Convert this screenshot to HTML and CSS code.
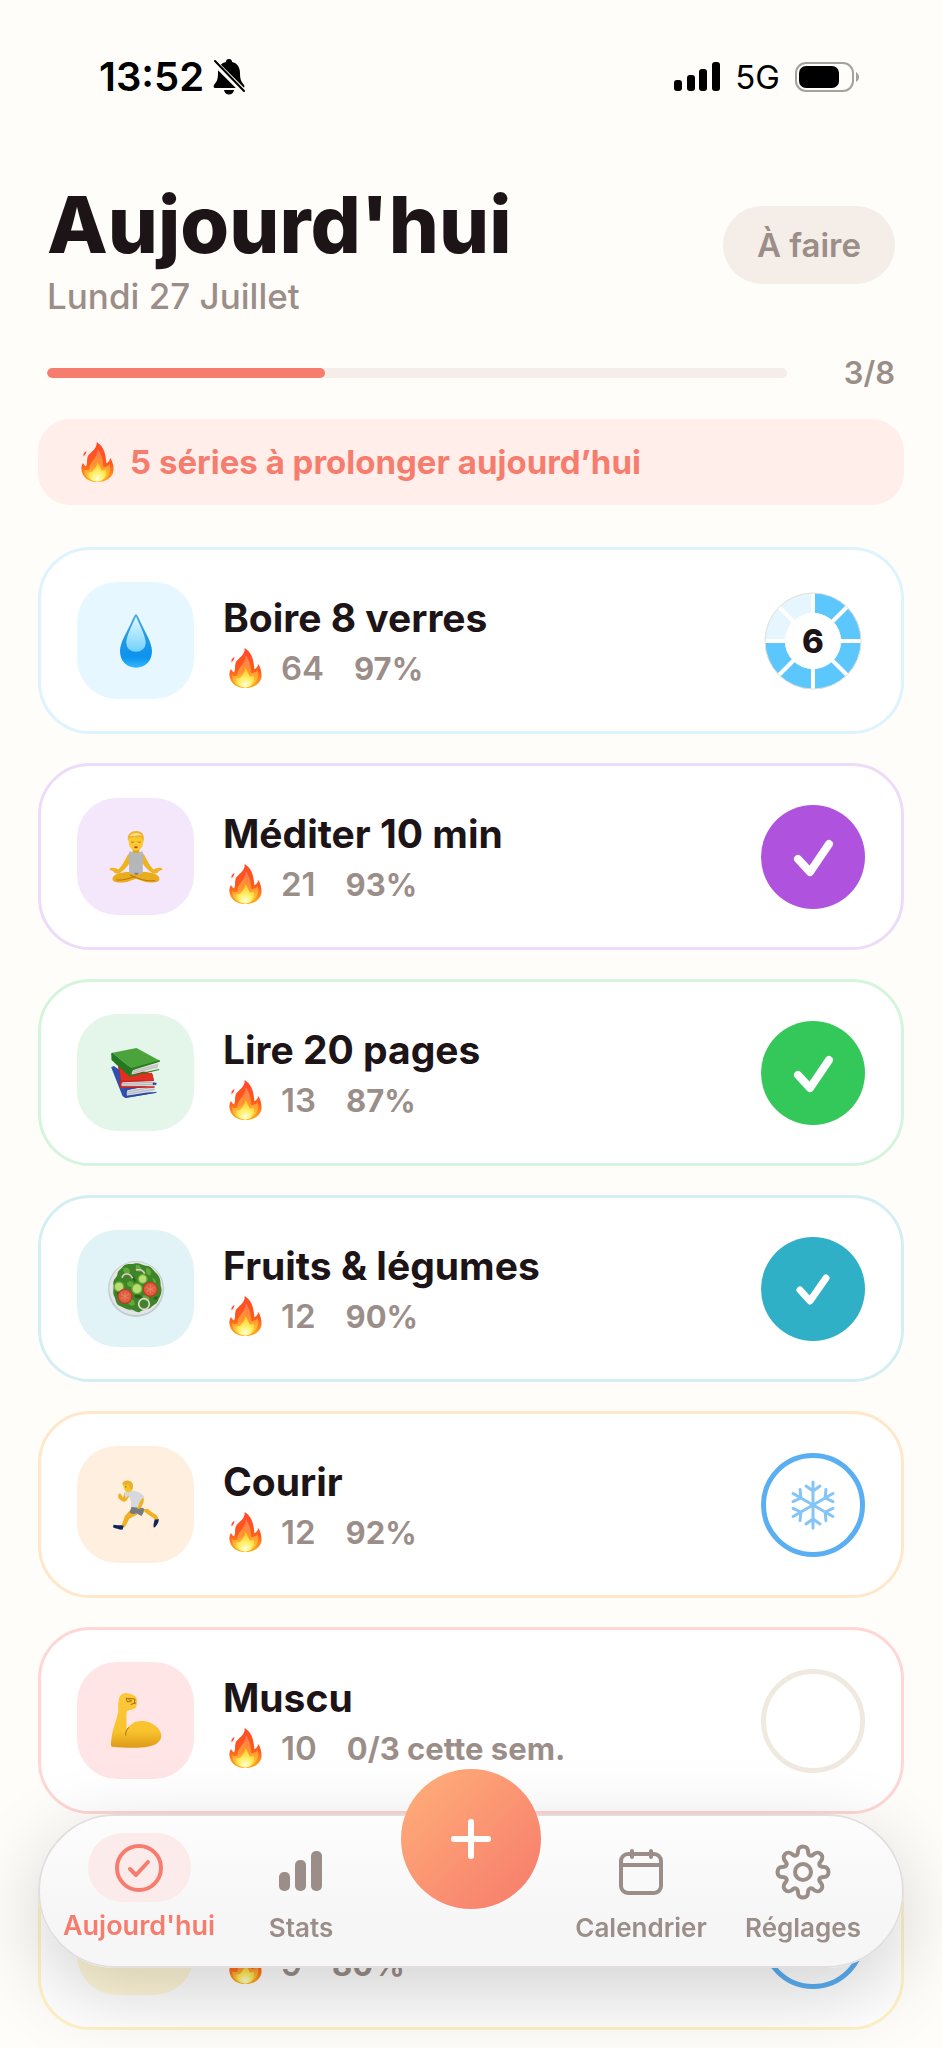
FILE: index.html
```html
<!DOCTYPE html>
<html lang="fr">
<head>
    <meta charset="UTF-8">
    <meta name="viewport" content="width=device-width, initial-scale=1.0">
    <title>Aujourd'hui</title>
    <link rel="stylesheet" href="styles.css">
</head>
<body>

    <!-- Symboles réutilisés -->
    <svg class="sprite" aria-hidden="true">
        <defs>
            <linearGradient id="flameOuter" x1="0" y1="0" x2="0" y2="1">
                <stop offset="0" stop-color="#ff4a2c"/>
                <stop offset="0.55" stop-color="#ff5a1c"/>
                <stop offset="1" stop-color="#ffb01c"/>
            </linearGradient>
            <linearGradient id="flameMid" x1="0" y1="0" x2="0" y2="1">
                <stop offset="0" stop-color="#ff7a50"/>
                <stop offset="0.5" stop-color="#ff9430"/>
                <stop offset="1" stop-color="#ffd93a"/>
            </linearGradient>
            <radialGradient id="flameCore" cx="0.5" cy="0.85" r="0.7">
                <stop offset="0" stop-color="#ffffd8"/>
                <stop offset="0.5" stop-color="#fff066"/>
                <stop offset="1" stop-color="#ffcf2e"/>
            </radialGradient>
        </defs>
        <symbol id="flame" viewBox="0 0 97 120">
            <path fill="url(#flameOuter)" d="M46 0C66 12 73 32 75 64C83 60 86 54 86 47C96 60 99 82 95 93C89 110 71 120 48 120C24 120 2 108 0 80C0 73 2 68 5 63C8 69 11 72 14 73C19 66 16 58 18 48C20 32 48 26 46 0Z"/>
            <path fill="#ff5230" d="M15 27C16 36 9 38 8 44C4 38 7 31 15 27Z"/>
            <path fill="url(#flameMid)" d="M49 22C60 36 65 52 66 76C76 75 82 70 85 65C91 88 82 113 49 118C22 117 8 102 9 82C14 86 20 86 25 82C21 60 50 50 49 22Z"/>
            <path fill="url(#flameCore)" d="M48 60C54 68 57 78 61 85C66 87 70 85 73 82C79 102 66 118 48 119C30 118 17 104 22 90C26 92 31 92 34 88C38 80 48 74 48 60Z"/>
        </symbol>
        <symbol id="check" viewBox="0 0 104 104">
            <path d="M37 54L49 67L68 39" fill="none" stroke="#fff" stroke-width="8" stroke-linecap="round" stroke-linejoin="round"/>
        </symbol>
        <symbol id="check-small" viewBox="0 0 104 104">
            <path d="M39 53L49 64L65 41" fill="none" stroke="#fff" stroke-width="7" stroke-linecap="round" stroke-linejoin="round"/>
        </symbol>
    </svg>

    <div class="status-bar">
        <div class="status-left">
            <span class="clock">13:52</span>
            <svg class="bell" viewBox="0 0 32 36">
                <path d="M16 0C18 0 19 1 19 3C24 4 27 8 27 14C27 22 29 23 31 26C32 28 31 29 30 29H2C1 29 0 28 1 26C3 23 5 22 5 14C5 8 8 4 13 3C13 1 14 0 16 0Z"/>
                <path d="M11 31H21C20 37 12 37 11 31Z"/>
                <path d="M0 2L31 33" stroke="#fffdf9" stroke-width="6"/>
                <path d="M2 2L31 32" stroke="#000" stroke-width="2" stroke-linecap="round"/>
            </svg>
        </div>
        <div class="status-right">
            <svg class="signal" viewBox="0 0 46 29">
                <rect x="0" y="18" width="8" height="11" rx="3"/>
                <rect x="13" y="13" width="8" height="16" rx="3"/>
                <rect x="25" y="7" width="8" height="22" rx="3"/>
                <rect x="38" y="0" width="8" height="29" rx="3"/>
            </svg>
            <span class="network">5G</span>
            <svg class="battery" viewBox="0 0 64 30">
                <rect x="1" y="1" width="57" height="28" rx="10" fill="none" stroke="#a3a29f" stroke-width="2"/>
                <path d="M61 10C65 12 65 18 61 20Z" fill="#a3a29f"/>
                <rect x="4" y="4" width="40" height="22" rx="7"/>
            </svg>
        </div>
    </div>

    <main class="page">
        <header class="page-header">
            <div>
                <h1>Aujourd'hui</h1>
                <p class="date">Lundi 27 Juillet</p>
            </div>
            <button type="button" class="filter-btn">À faire</button>
        </header>

        <div class="progress-row">
            <div class="progress-track">
                <div class="progress-fill" style="width: 37.5%"></div>
            </div>
            <span class="progress-label">3/8</span>
        </div>

        <div class="streak-banner">
            <svg class="flame"><use href="#flame"/></svg>
            <span>5 séries à prolonger aujourd’hui</span>
        </div>

        <ul class="habits">
            <li class="habit sky">
                <div class="habit-icon">
                    <svg width="32" height="54" viewBox="0 0 96 160">
                        <defs>
                            <linearGradient id="dropBody" x1="0" y1="0" x2="0" y2="1">
                                <stop offset="0" stop-color="#4aa8d8"/>
                                <stop offset="0.5" stop-color="#1e98e4"/>
                                <stop offset="0.8" stop-color="#0b93ee"/>
                                <stop offset="1" stop-color="#35b8fa"/>
                            </linearGradient>
                            <linearGradient id="dropShine" x1="0" y1="0" x2="0" y2="1">
                                <stop offset="0" stop-color="#e0f6ff"/>
                                <stop offset="0.6" stop-color="#a2e2ff"/>
                                <stop offset="1" stop-color="#6fd0ff"/>
                            </linearGradient>
                        </defs>
                        <path fill="url(#dropBody)" d="M48 0C52 0 56 12 64 28C76 54 96 84 96 110C96 140 76 160 48 160C20 160 0 140 0 110C0 84 20 54 32 28C40 12 44 0 48 0Z"/>
                        <path fill="url(#dropShine)" d="M48 6C52 18 78 66 77 86C76 104 63 112 48 112C33 112 20 104 19 86C18 66 44 18 48 6Z"/>
                    </svg>
                </div>
                <div class="habit-body">
                    <h2>Boire 8 verres</h2>
                    <p class="habit-meta"><svg class="flame"><use href="#flame"/></svg><span class="streak">64</span><span class="rate">97%</span></p>
                </div>
                <button type="button" class="habit-state counter" aria-label="Ajouter un verre">
                    <svg viewBox="0 0 104 104">
                        <circle cx="52" cy="52" r="38" fill="none" stroke="#e6f6fe" stroke-width="20"/>
                        <circle cx="52" cy="52" r="38" fill="none" stroke="#5bc7fd" stroke-width="20" pathLength="8" stroke-dasharray="6 2" transform="rotate(-90 52 52)"/>
                        <path d="M52 3V101M3 52H101M17 17L87 87M87 17L17 87" stroke="#fff" stroke-width="4"/>
                        <circle cx="52" cy="52" r="28" fill="#fff"/>
                        <circle cx="52" cy="52" r="48" fill="none" stroke="#e3ded6" stroke-width="1"/>
                    </svg>
                    <span>6</span>
                </button>
            </li>

            <li class="habit purple">
                <div class="habit-icon">
                    <svg width="54" height="52" viewBox="0 0 160 157">
                        <path fill="#eeb41f" d="M58 68C48 84 40 104 27 116C18 111 4 108 0 115C0 120 8 118 12 122C18 130 26 130 32 126C46 116 58 104 62 92ZM102 68C112 84 120 104 133 116C142 111 156 108 160 115C160 120 152 118 148 122C142 130 134 130 128 126C114 116 102 104 98 92Z"/>
                        <path fill="#e9ac1c" d="M60 124C34 124 8 132 9 145C10 157 30 157 52 154L80 144L108 154C130 157 150 157 151 145C152 132 126 124 100 124Z"/>
                        <path fill="none" stroke="#b97508" stroke-width="3" d="M20 148C45 150 60 142 78 137M62 133C90 146 110 152 138 150"/>
                        <path fill="#e5a51b" d="M70 48H90V68H70Z"/>
                        <path fill="#b4b6ba" d="M60 63C67 60 68 66 80 67C92 66 93 60 100 63C105 75 99 88 101 126C90 132 70 132 59 126C61 88 55 75 60 63Z"/>
                        <path fill="#7d8087" d="M74 126H88L84 132H78Z"/>
                        <path fill="#fbc92f" d="M58 26C58 8 102 8 102 26C104 48 92 60 80 60C68 60 56 48 58 26Z"/>
                        <path fill="#efb32c" d="M56 30C52 10 64 0 81 0C98 0 107 12 103 32C100 26 98 20 90 18C80 22 66 18 61 22C58 24 58 28 56 30Z"/>
                        <path fill="#ffe08a" d="M62 14C68 4 92 2 98 14C88 10 74 18 62 14Z"/>
                        <path fill="none" stroke="#80520a" stroke-width="2" stroke-linecap="round" d="M66 33C68 35 72 35 74 33M86 33C88 35 92 35 94 33"/>
                        <path fill="#b6401d" d="M74 48C78 45 82 45 86 48C83 53 77 53 74 48Z"/>
                    </svg>
                </div>
                <div class="habit-body">
                    <h2>Méditer 10 min</h2>
                    <p class="habit-meta"><svg class="flame"><use href="#flame"/></svg><span class="streak">21</span><span class="rate">93%</span></p>
                </div>
                <button type="button" class="habit-state done" aria-label="Méditer 10 min, fait"><svg><use href="#check"/></svg></button>
            </li>

            <li class="habit green">
                <div class="habit-icon">
                    <svg width="49" height="50" viewBox="0 0 146 150">
                        <path fill="#2f50ae" d="M0 58L8 54L60 90L134 104L136 110L44 128L136 134L42 150L34 144Z"/>
                        <path fill="#dcdde2" d="M46 126L132 110L130 130L46 143Z"/>
                        <path fill="none" stroke="#9b9ca4" stroke-width="2" d="M47 132L130 117M47 138L130 124"/>
                        <path fill="#2c4ba6" d="M42 122L136 104V108L50 126C44 132 46 140 48 144L136 131V134L42 150Z"/>
                        <path fill="#c92019" d="M20 56L30 48L124 78L128 96L32 102Z"/>
                        <path fill="#e12f22" d="M24 58L60 82L122 74L128 97L30 101Z"/>
                        <path fill="#dcdcdc" d="M30 101L126 98L124 114L30 116Z"/>
                        <path fill="none" stroke="#a3a3a3" stroke-width="2" d="M32 107L125 103M32 112L125 109"/>
                        <path fill="#ce241b" d="M24 98L128 96V99L34 103C29 108 30 113 32 115L130 115V119L27 120Z"/>
                        <path fill="#4ba43b" d="M4 14L76 0L146 38L62 62Z"/>
                        <path fill="#23791f" d="M0 16L4 14L62 62L56 86C40 72 16 50 1 36Z"/>
                        <path fill="#dfe0de" d="M62 66L142 44L140 60L60 80Z"/>
                        <path fill="none" stroke="#a2a3a1" stroke-width="2" d="M62 71L141 50M61 76L140 56"/>
                        <path fill="#277f22" d="M58 61L146 37V41L66 66C60 72 60 78 62 81L144 63V66L56 87Z"/>
                    </svg>
                </div>
                <div class="habit-body">
                    <h2>Lire 20 pages</h2>
                    <p class="habit-meta"><svg class="flame"><use href="#flame"/></svg><span class="streak">13</span><span class="rate">87%</span></p>
                </div>
                <button type="button" class="habit-state done" aria-label="Lire 20 pages, fait"><svg><use href="#check"/></svg></button>
            </li>

            <li class="habit teal">
                <div class="habit-icon">
                    <svg width="56" height="56" viewBox="0 0 168 168">
                        <circle cx="84" cy="84" r="84" fill="#c5cbcc"/>
                        <circle cx="84" cy="82" r="80" fill="#e2e6e6"/>
                        <circle cx="84" cy="82" r="70" fill="#cfd5d4"/>
                        <path fill="#3d8526" d="M42 20C54 4 68 12 78 8C94 4 104 14 114 14C130 14 136 28 144 36C156 46 158 60 158 74C164 90 158 104 152 114C148 130 134 132 128 140C118 146 104 144 94 154C82 154 76 144 66 146C52 144 44 138 34 134C22 128 24 114 18 104C12 92 20 82 16 70C14 56 26 50 28 42C28 30 36 26 42 20Z"/>
                        <path fill="#61a93a" d="M46 22C58 14 70 26 64 38C54 44 44 36 46 22ZM84 12C96 10 104 22 98 32C86 34 80 24 84 12ZM116 20C128 22 134 36 126 44C116 42 110 32 116 20ZM56 66C68 56 78 62 78 74C70 82 58 78 56 66ZM104 104C116 100 126 106 124 118C112 122 104 116 104 104ZM60 118C72 110 82 118 80 132C68 138 58 130 60 118ZM132 50C144 54 146 62 140 70Z"/>
                        <path fill="#24641a" d="M70 40C80 46 84 54 82 64C74 58 68 50 70 40ZM92 48C98 40 108 44 112 52C104 60 96 58 92 48ZM78 104C88 98 100 100 102 112C92 114 82 112 78 104ZM26 86C34 92 38 100 34 108C26 102 24 94 26 86ZM136 112C142 106 148 104 150 108C146 118 140 118 136 112Z"/>
                        <path fill="none" stroke="#e6c6d2" stroke-width="5" d="M42 50C46 36 66 34 74 52M84 28C94 22 106 28 110 38"/>
                        <g fill="#b8dd72" stroke="#6aae38" stroke-width="4">
                            <circle cx="33" cy="77" r="14"/>
                            <circle cx="104" cy="54" r="13"/>
                            <circle cx="87" cy="83" r="15"/>
                        </g>
                        <g fill="#dd5f43" stroke="#c03a26" stroke-width="4">
                            <circle cx="51" cy="106" r="21"/>
                            <circle cx="127" cy="85" r="21"/>
                        </g>
                        <path stroke="#ea8560" stroke-width="3" d="M51 94V118M39 99L63 113M39 113L63 99M127 73V97M115 79L139 91M115 91L139 79"/>
                        <circle cx="108" cy="129" r="16" fill="none" stroke="#ecd2dc" stroke-width="5"/>
                    </svg>
                </div>
                <div class="habit-body">
                    <h2>Fruits &amp; légumes</h2>
                    <p class="habit-meta"><svg class="flame"><use href="#flame"/></svg><span class="streak">12</span><span class="rate">90%</span></p>
                </div>
                <button type="button" class="habit-state done" aria-label="Fruits et légumes, fait"><svg><use href="#check-small"/></svg></button>
            </li>

            <li class="habit orange">
                <div class="habit-icon">
                    <svg width="46" height="50" viewBox="0 0 139 150">
                        <path fill="#f0b021" d="M52 90L36 108C32 118 30 130 24 138L34 142C42 136 44 124 50 116L74 104ZM88 88C98 100 112 108 122 114C128 118 128 124 128 132L136 126C140 112 132 104 122 100L104 86Z"/>
                        <path fill="#10235f" d="M2 134C12 138 20 134 32 138C32 142 30 148 28 150C18 148 8 146 0 142ZM126 118C130 120 134 118 138 117C140 126 132 138 124 144C120 140 124 128 126 118Z"/>
                        <path fill="#777b80" d="M56 80L92 84C96 92 92 100 86 108C78 106 72 98 66 102C58 104 54 100 50 98Z"/>
                        <path fill="#efb226" d="M36 36L30 52C26 48 26 40 20 40C14 42 14 52 20 58C28 66 36 68 40 62L50 48ZM78 44L92 52C96 62 90 74 84 84C78 90 70 86 72 78C76 70 80 66 80 62Z"/>
                        <path fill="#d6d8dd" d="M36 38C46 30 60 30 72 34C82 38 90 42 94 50L84 60C80 66 78 74 76 80C68 84 60 80 54 80C58 66 52 56 46 46L40 54C36 50 34 44 36 38Z"/>
                        <path fill="#f8c42c" d="M30 10C40 0 58 6 59 22C60 34 46 40 38 34C36 28 30 22 30 10Z"/>
                        <path fill="#eab02b" d="M28 14C28 2 44 -2 54 4C64 10 60 24 58 28L52 28L48 14C42 16 34 12 28 14Z"/>
                        <circle cx="39" cy="20" r="2" fill="#5d3900"/>
                    </svg>
                </div>
                <div class="habit-body">
                    <h2>Courir</h2>
                    <p class="habit-meta"><svg class="flame"><use href="#flame"/></svg><span class="streak">12</span><span class="rate">92%</span></p>
                </div>
                <button type="button" class="habit-state frozen" aria-label="Courir, série gelée">
                    <svg viewBox="-52 -52 104 104">
                        <g fill="none" stroke="#85c4f7" stroke-width="3" stroke-linecap="round" stroke-linejoin="round">
                            <path d="M0 0V-23M-7 -19L0 -14L7 -19"/>
                            <path d="M0 0V-23M-7 -19L0 -14L7 -19" transform="rotate(60)"/>
                            <path d="M0 0V-23M-7 -19L0 -14L7 -19" transform="rotate(120)"/>
                            <path d="M0 0V-23M-7 -19L0 -14L7 -19" transform="rotate(180)"/>
                            <path d="M0 0V-23M-7 -19L0 -14L7 -19" transform="rotate(240)"/>
                            <path d="M0 0V-23M-7 -19L0 -14L7 -19" transform="rotate(300)"/>
                        </g>
                    </svg>
                </button>
            </li>

            <li class="habit red">
                <div class="habit-icon">
                    <svg width="52" height="55" viewBox="0 0 154 165">
                        <defs>
                            <linearGradient id="arm" x1="0" y1="0" x2="0" y2="1">
                                <stop offset="0" stop-color="#fbc93a"/>
                                <stop offset="0.7" stop-color="#f9c22e"/>
                                <stop offset="1" stop-color="#dd9a18"/>
                            </linearGradient>
                        </defs>
                        <path fill="url(#arm)" d="M26 18C28 6 38 0 48 0C60 2 74 6 78 14C82 24 80 38 76 44C68 50 58 50 50 54C46 68 50 90 48 112C58 92 78 82 98 84C126 86 150 106 153 126C154 144 138 158 112 161C84 166 44 164 4 161C0 158 2 150 3 140C6 108 18 86 24 54C24 40 22 30 26 18Z"/>
                        <path fill="none" stroke="#a86b0c" stroke-width="3" stroke-linecap="round" d="M46 126C46 118 48 112 54 104M48 16L74 18L72 30M48 16L50 26L60 26M62 34L76 30M56 20L64 24"/>
                    </svg>
                </div>
                <div class="habit-body">
                    <h2>Muscu</h2>
                    <p class="habit-meta"><svg class="flame"><use href="#flame"/></svg><span class="streak">10</span><span class="rate">0/3 cette sem.</span></p>
                </div>
                <button type="button" class="habit-state todo" aria-label="Muscu, à faire"></button>
            </li>

            <li class="habit yellow">
                <div class="habit-icon"></div>
                <div class="habit-body">
                    <h2>&nbsp;</h2>
                    <p class="habit-meta"><svg class="flame"><use href="#flame"/></svg><span class="streak">9</span><span class="rate">80%</span></p>
                </div>
                <button type="button" class="habit-state frozen" aria-label="Série gelée"></button>
            </li>
        </ul>
    </main>

    <nav class="tab-bar">
        <a href="#" class="tab active">
            <span class="tab-icon">
                <svg width="50" height="50" viewBox="0 0 50 50" fill="none" stroke="currentColor" stroke-width="4" stroke-linecap="round" stroke-linejoin="round">
                    <circle cx="25" cy="25" r="22"/>
                    <path d="M16 26L22 32L34 19"/>
                </svg>
            </span>
            <span>Aujourd'hui</span>
        </a>
        <a href="#" class="tab">
            <span class="tab-icon">
                <svg width="44" height="58" viewBox="0 0 44 58" fill="currentColor">
                    <rect x="0" y="29" width="11" height="19" rx="5"/>
                    <rect x="16" y="17" width="11" height="31" rx="5"/>
                    <rect x="32" y="8" width="11" height="40" rx="5"/>
                </svg>
            </span>
            <span>Stats</span>
        </a>
        <div class="tab-center">
            <button type="button" class="add-btn" aria-label="Ajouter une habitude">
                <svg width="40" height="40" viewBox="0 0 40 40" stroke="#fff" stroke-width="6" stroke-linecap="round">
                    <path d="M20 3V37M3 20H37"/>
                </svg>
            </button>
        </div>
        <a href="#" class="tab">
            <span class="tab-icon">
                <svg width="46" height="58" viewBox="0 0 46 58" fill="none" stroke="currentColor" stroke-width="4" stroke-linecap="round">
                    <rect x="3" y="11" width="40" height="39" rx="7"/>
                    <path d="M3 22H43M14 8V14M33 8V14"/>
                </svg>
            </span>
            <span>Calendrier</span>
        </a>
        <a href="#" class="tab">
            <span class="tab-icon">
                <svg width="58" height="58" viewBox="-29 -29 58 58" fill="none" stroke="currentColor" stroke-width="4" stroke-linejoin="round">
                    <circle r="8"/>
                    <path d="M-5 -21C-5 -27 5 -27 5 -21C5 -16 8 -15 11 -18C16 -22 22 -16 18 -11C15 -8 16 -5 21 -5C27 -5 27 5 21 5C16 5 15 8 18 11C22 16 16 22 11 18C8 15 5 16 5 21C5 27 -5 27 -5 21C-5 16 -8 15 -11 18C-16 22 -22 16 -18 11C-15 8 -16 5 -21 5C-27 5 -27 -5 -21 -5C-16 -5 -15 -8 -18 -11C-22 -16 -16 -22 -11 -18C-8 -15 -5 -16 -5 -21Z"/>
                </svg>
            </span>
            <span>Réglages</span>
        </a>
    </nav>

</body>
</html>
```
FILE: styles.css
```css
* {
    box-sizing: border-box;
}

body {
    margin: 0;
    font-family: 'Inter', 'Liberation Sans', sans-serif;
    background-color: #fffdf9;
    color: #1c1416;
    min-height: 100vh;
}

h1, h2, p, ul {
    margin: 0;
    padding: 0;
}

svg {
    display: block;
}

button {
    font-family: inherit;
    border: none;
    padding: 0;
    cursor: pointer;
}

.sprite {
    position: absolute;
    width: 0;
    height: 0;
}

/* Barre d'état */
.status-bar {
    display: flex;
    justify-content: space-between;
    align-items: center;
    height: 101px;
    padding: 52px 83px 0 99px;
    color: #000;
}

.status-left,
.status-right {
    display: flex;
    align-items: center;
}

.status-left {
    gap: 9px;
}

.status-right {
    gap: 15px;
}

.clock {
    font-size: 40px;
    font-weight: 600;
}

.network {
    font-size: 33px;
    font-weight: 400;
}

.bell {
    width: 32px;
    height: 36px;
}

.signal {
    width: 46px;
    height: 29px;
}

.battery {
    width: 64px;
    height: 30px;
}

/* En-tête */
.page {
    padding: 73px 38px 18px;
}

.page-header {
    display: flex;
    justify-content: space-between;
    align-items: center;
    padding: 0 9px;
}

h1 {
    font-size: 79px;
    line-height: 100px;
    font-weight: 800;
}

.date {
    margin-top: 2px;
    font-size: 35px;
    line-height: 40px;
    font-weight: 500;
    color: #9b8e89;
}

.filter-btn {
    height: 78px;
    padding: 0 34px;
    border-radius: 39px;
    background-color: #f5ede8;
    color: #9b8e89;
    font-size: 33px;
    font-weight: 600;
}

.progress-row {
    display: flex;
    align-items: center;
    margin-top: 37px;
    padding: 0 9px;
}

.progress-track {
    flex: 1;
    height: 10px;
    border-radius: 5px;
    background-color: #f5ede8;
    overflow: hidden;
}

.progress-fill {
    height: 100%;
    border-radius: 5px;
    background-color: #f67d6e;
}

.progress-label {
    width: 108px;
    text-align: right;
    font-size: 31px;
    line-height: 40px;
    font-weight: 600;
    color: #9b8e89;
}

.streak-banner {
    display: flex;
    align-items: center;
    gap: 16px;
    height: 86px;
    margin-top: 26px;
    padding: 0 43px;
    border-radius: 32px;
    background-color: #ffeeea;
    color: #f67d6e;
    font-size: 33px;
    font-weight: 700;
}

.flame {
    width: 33px;
    height: 40px;
    flex: none;
}

/* Liste des habitudes */
.habits {
    display: flex;
    flex-direction: column;
    gap: 29px;
    margin-top: 42px;
    list-style-type: none;
}

.habit {
    display: flex;
    align-items: center;
    gap: 29px;
    height: 187px;
    padding: 0 36px;
    border: 3px solid;
    border-radius: 52px;
    background-color: #fff;
}

.habit-icon {
    display: flex;
    align-items: center;
    justify-content: center;
    width: 117px;
    height: 117px;
    border-radius: 40px;
}

.habit-body {
    flex: 1;
    padding-top: 3px;
}

.habit h2 {
    font-size: 39px;
    line-height: 52px;
    font-weight: 700;
}

.habit-meta {
    display: flex;
    align-items: center;
    height: 48px;
    padding-left: 6px;
    color: #9b8e89;
}

.streak {
    margin-left: 19px;
    font-size: 33px;
    font-weight: 600;
}

.rate {
    margin-left: 30px;
    font-size: 31px;
    font-weight: 700;
}

.habit-state {
    display: flex;
    align-items: center;
    justify-content: center;
    width: 104px;
    height: 104px;
    border-radius: 50%;
    background-color: transparent;
}

.habit-state svg {
    width: 104px;
    height: 104px;
    flex: none;
}

.counter {
    position: relative;
    color: #1c1416;
    font-size: 33px;
    font-weight: 800;
}

.counter span {
    position: absolute;
}

.frozen {
    border: 5px solid #5aaff3;
}

.todo {
    border: 5px solid #efe9e0;
}

.sky { border-color: #ddf3fe; }
.sky .habit-icon { background-color: #e7f7ff; }

.purple { border-color: #eddcf9; }
.purple .habit-icon { background-color: #f5e7fb; }
.purple .done { background-color: #af52de; }

.green { border-color: #d5f4dd; }
.green .habit-icon { background-color: #e4f6e9; }
.green .done { background-color: #34c759; }

.teal { border-color: #d4eff4; }
.teal .habit-icon { background-color: #e1f3f7; }
.teal .done { background-color: #30b0c7; }

.orange { border-color: #ffe8c9; }
.orange .habit-icon { background-color: #ffefde; }

.red { border-color: #ffd6d4; }
.red .habit-icon { background-color: #ffe5e5; }

.yellow { border-color: #fff2c6; }
.yellow .habit-icon { background-color: #fff8d9; }

/* Barre d'onglets */
.tab-bar {
    position: fixed;
    left: 38px;
    right: 38px;
    bottom: 80px;
    display: flex;
    height: 154px;
    padding: 0 18px;
    border: 2px solid #e2dedf;
    border-radius: 77px;
    background: linear-gradient(#fdfdfd, #f6f6f6 70%);
    box-shadow: 0 24px 80px rgba(0, 0, 0, 0.18);
}

.tab {
    flex: 1;
    display: flex;
    flex-direction: column;
    align-items: center;
    gap: 11px;
    padding-top: 27px;
    color: #9b8e89;
    font-size: 26px;
    line-height: 32px;
    font-weight: 600;
    text-decoration: none;
}

.tab-icon {
    display: flex;
    align-items: center;
    justify-content: center;
    height: 58px;
}

.tab.active {
    gap: 8px;
    padding-top: 17px;
    color: #f67d6e;
    font-size: 27px;
}

.active .tab-icon {
    width: 103px;
    height: 69px;
    border-radius: 35px;
    background-color: #fbebea;
}

.tab-center {
    width: 178px;
    display: flex;
    justify-content: center;
}

.add-btn {
    display: flex;
    align-items: center;
    justify-content: center;
    width: 140px;
    height: 140px;
    margin-top: -47px;
    border-radius: 50%;
    background: linear-gradient(135deg, #ffb07a, #f67a6b);
}
```
